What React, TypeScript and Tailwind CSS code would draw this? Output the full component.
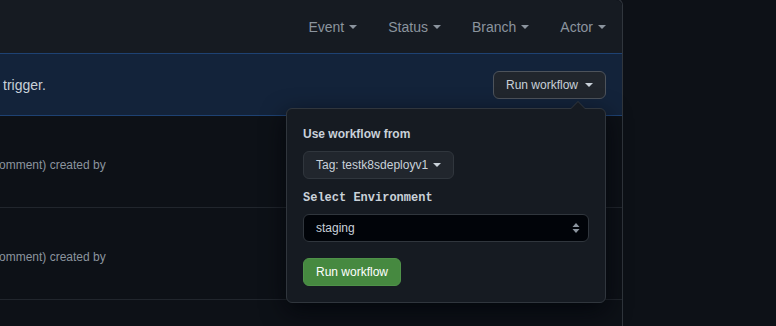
import type { ReactNode } from "react";

const FILTERS = ["Event", "Status", "Branch", "Actor"];

function Caret({ className = "border-t-[#8b949e]" }: { className?: string }) {
	return (
		<span
			className={`ml-[5px] inline-block h-0 w-0 border-x-4 border-t-4 border-x-transparent ${className}`}
		/>
	);
}

function Row({ children }: { children: ReactNode }) {
	return (
		<div className="flex h-[92px] items-center border-b border-[#21262d] pt-[6px] text-xs text-[#8b949e]">
			{children}
		</div>
	);
}

export default function App() {
	return (
		<div className="h-[326px] w-[776px] overflow-hidden bg-[#0d1117] font-['Liberation_Sans',Arial,sans-serif]">
			<div className="-mt-px w-[623px] rounded-tr-md border-r border-t border-[#30363d] bg-[#0d1117]">
				{/* Filter bar */}
				<div className="flex h-[54px] items-center justify-end gap-[31px] rounded-tr-md border-b border-[#1e4273] bg-[#161b22] pr-4 text-sm text-[#8b949e]">
					{FILTERS.map((label) => (
						<span key={label} className="flex items-center">
							{label}
							<Caret />
						</span>
					))}
				</div>

				{/* Dispatch banner */}
				<div className="flex h-[62px] items-center justify-between border-b border-[#1e4273] bg-[#13233a] pl-[3px] pr-4 text-sm text-[#c9d1d9]">
					<span>trigger.</span>
					<div className="relative z-10">
						<button
							type="button"
							className="flex h-[28px] items-center rounded-md border border-[#4d535b] bg-[#21262d] px-3 text-xs text-[#c9d1d9]"
						>
							Run workflow
							<Caret className="ml-[7px] border-t-[#c9d1d9]" />
						</button>

						{/* Popover */}
						<div className="absolute right-0 top-[37px] w-[320px] rounded-md border border-[#30363d] bg-[#161b22] p-4 shadow-[0_8px_24px_rgba(1,4,9,0.75)]">
							<span className="absolute right-[19px] top-[-8px] h-0 w-0 border-x-8 border-b-8 border-x-transparent border-b-[#30363d]" />
							<span className="absolute right-[20px] top-[-7px] h-0 w-0 border-x-[7px] border-b-[7px] border-x-transparent border-b-[#161b22]" />

							<div className="text-xs font-bold leading-[18px] text-[#c9d1d9]">Use workflow from</div>
							<button
								type="button"
								className="mt-2 flex h-[28px] items-center rounded-md border border-[#30363d] bg-[#21262d] px-3 text-xs text-[#c9d1d9]"
							>
								Tag: testk8sdeployv1
								<Caret className="ml-[4px] border-t-[#c9d1d9]" />
							</button>

							<div className="mt-[9px] font-['Liberation_Mono',monospace] text-xs font-bold leading-[20px] text-[#c9d1d9]">
								Select Environment
							</div>
							<div className="mt-[6px] flex h-[28px] items-center justify-between rounded-md border border-[#30363d] bg-[#010409] pl-3 pr-2 text-xs text-[#c9d1d9]">
								<span>staging</span>
								<svg width="8" height="12" viewBox="0 0 8 12" className="text-[#8b949e]">
									<path d="M4 1 L7.5 5 L0.5 5 Z" fill="currentColor" />
									<path d="M4 11 L7.5 7 L0.5 7 Z" fill="currentColor" />
								</svg>
							</div>

							<button
								type="button"
								className="mt-4 flex h-[28px] items-center rounded-md border border-[#4f9249] bg-[#468940] px-3 text-xs text-white"
							>
								Run workflow
							</button>
						</div>
					</div>
				</div>

				{/* Run list */}
				<Row>
					<span className="-ml-[1px]">omment) created by</span>
				</Row>
				<Row>
					<span className="-ml-[1px]">omment) created by</span>
				</Row>
				<Row>
					<span />
				</Row>
			</div>
		</div>
	);
}
